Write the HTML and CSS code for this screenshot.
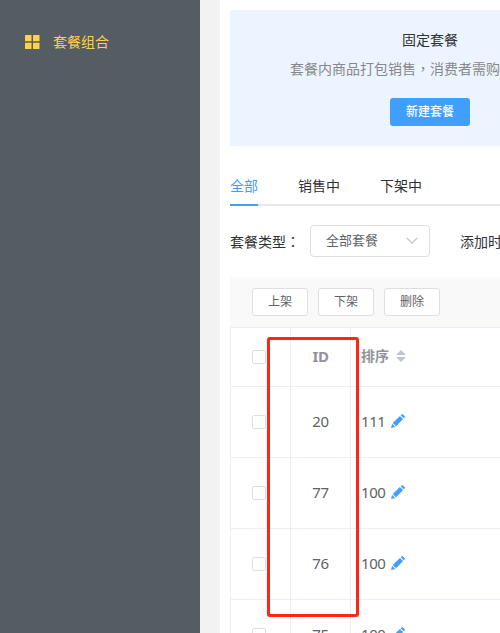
FILE: index.html
```html
<!DOCTYPE html>
<html lang="zh-CN">
<head>
<meta charset="utf-8">
<title>套餐组合</title>
<link rel="stylesheet" href="styles.css">
</head>
<body>
<svg class="defs" width="0" height="0">
  <symbol id="pencil" viewBox="0 0 14 14">
    <path d="M0 14 L1.1 9.8 L4.2 12.9 Z M1.8 9 L8.9 1.9 L12.1 5.1 L5 12.2 Z M9.7 1.2 L10.5 .4 Q11.2 -.2 11.9 .4 L13.6 2.1 Q14.2 2.8 13.6 3.5 L12.8 4.3 Z"/>
  </symbol>
</svg>
<div class="app">
  <aside class="sidebar">
    <a class="menu-item">
      <svg class="menu-icon" width="15" height="14" viewBox="0 0 15 14"><rect width="6.5" height="6.2" rx=".5"/><rect x="8" width="6.5" height="6.2" rx=".5"/><rect y="7.8" width="6.5" height="6.2" rx=".5"/><rect x="8" y="7.8" width="6.5" height="6.2" rx=".5"/></svg>
      <span>套餐组合</span>
    </a>
  </aside>
  <main class="content">
    <section class="promo">
      <div class="promo-card">
        <h3 class="promo-title">固定套餐</h3>
        <p class="promo-desc">套餐内商品打包销售<span class="punct" lang="zh-TW">&#xFF0C;</span>消费者需购</p>
        <button class="btn-primary">新建套餐</button>
      </div>
    </section>
    <nav class="tabs"><a class="tab active">全部</a><a class="tab">销售中</a><a class="tab">下架中</a></nav>
    <div class="filters">
      <span class="label">套餐类型<span class="punct" lang="zh-TW">&#xFF1A;</span></span>
      <div class="select"><span>全部套餐</span><svg width="12" height="8" viewBox="0 0 12 8"><path d="M.8 1 L6 6.2 L11.2 1"/></svg></div>
      <span class="label">添加时</span>
    </div>
    <div class="toolbar"><button class="btn">上架</button><button class="btn">下架</button><button class="btn">删除</button></div>
    <div class="table">
      <div class="row head"><div class="cell check"><i class="checkbox"></i></div><div class="cell id"><span class="num">ID</span></div><div class="cell sort"><span class="th">排序</span><svg class="carets" width="10" height="12" viewBox="0 0 10 12"><path d="M0 5 L5 0 L10 5 Z M0 7 L10 7 L5 12 Z"/></svg></div></div>
      <div class="row"><div class="cell check"><i class="checkbox"></i></div><div class="cell id"><span class="num">20</span></div><div class="cell sort"><span class="num">111</span><svg class="edit"><use href="#pencil"/></svg></div></div>
      <div class="row"><div class="cell check"><i class="checkbox"></i></div><div class="cell id"><span class="num">77</span></div><div class="cell sort"><span class="num">100</span><svg class="edit"><use href="#pencil"/></svg></div></div>
      <div class="row"><div class="cell check"><i class="checkbox"></i></div><div class="cell id"><span class="num">76</span></div><div class="cell sort"><span class="num">100</span><svg class="edit"><use href="#pencil"/></svg></div></div>
      <div class="row"><div class="cell check"><i class="checkbox"></i></div><div class="cell id"><span class="num">75</span></div><div class="cell sort"><span class="num">100</span><svg class="edit"><use href="#pencil"/></svg></div></div>
      <div class="highlight"></div>
    </div>
  </main>
</div>
</body>
</html>
```
FILE: styles.css
```css
* { box-sizing: border-box; }
body {
  margin: 0;
  font: 14px/20px "Noto Sans", "Noto Sans CJK SC", sans-serif;
  color: #303133;
}
.defs { position: absolute; }
.app {
  display: flex;
  width: 100%;
  height: 633px;
  overflow: hidden;
  background: #f2f2f2;
}
.sidebar { flex: 0 0 200px; background: #545c64; }
.menu-item {
  display: flex;
  align-items: center;
  gap: 13px;
  height: 20px;
  margin: 32px 0 0 25px;
  color: #ffd04b;
}
.menu-icon { fill: #ffd04b; }
.content {
  flex: 1;
  min-width: 0;
  height: 633px;
  margin-left: 20px;
  padding: 10px 0 0 10px;
  overflow: hidden;
  background: #fff;
}
.promo { height: 136px; overflow: hidden; background: #ecf5ff; }
.promo-card {
  display: flex;
  flex-direction: column;
  align-items: center;
  width: 400px;
  padding-top: 20px;
}
.promo-title { margin: 0; font-size: 14px; font-weight: 400; }
.promo-desc {
  width: 280px;
  height: 20px;
  margin: 9px 0 0;
  color: #888;
  white-space: nowrap;
}
.punct { font-family: "Noto Sans CJK TC", sans-serif; line-height: 1; }
button { font: 12px/16px "Noto Sans", "Noto Sans CJK SC", sans-serif; padding: 0; border-radius: 3px; }
.btn-primary {
  width: 80px;
  height: 28px;
  margin-top: 19px;
  border: 0;
  background: #409eff;
  color: #fff;
  font-weight: 500;
}
.tabs {
  display: flex;
  gap: 40px;
  height: 40px;
  margin-top: 20px;
  border-bottom: 2px solid #e4e7ed;
}
.tab { height: 40px; line-height: 40px; }
.tab.active { border-bottom: 2px solid #409eff; color: #409eff; }
.filters {
  display: flex;
  align-items: center;
  height: 32px;
  margin-top: 19px;
  white-space: nowrap;
}
.label { height: 20px; margin-top: 2px; }
.select {
  display: flex;
  flex: 0 0 120px;
  align-items: center;
  justify-content: space-between;
  height: 32px;
  margin: 0 30px 0 10px;
  padding: 0 11px 2px 15px;
  border: 1px solid #dcdfe6;
  border-radius: 4px;
  color: #606266;
  font-size: 13px;
}
.select svg { fill: none; stroke: #c0c4cc; stroke-width: 1.1; margin-top: 2px; }
.toolbar {
  display: flex;
  gap: 10px;
  height: 50px;
  margin-top: 20px;
  padding: 11px 22px;
  background: #f9f9f9;
}
.btn { width: 56px; height: 28px; border: 1px solid #dcdfe6; background: #fff; color: #606266; }
.table {
  position: relative;
  border-top: 1px solid #ebeef5;
  border-left: 1px solid #ebeef5;
  color: #606266;
}
.row { display: flex; height: 71px; border-bottom: 1px solid #ebeef5; }
.row.head { height: 59px; color: #909399; font-weight: 700; }
.cell { display: flex; align-items: center; }
.check { width: 60px; padding-left: 21px; border-right: 1px solid #ebeef5; }
.id { width: 60px; justify-content: center; border-right: 1px solid #ebeef5; }
.sort { flex: 1; padding-left: 10px; }
.num { font-size: 15px; letter-spacing: -.4px; padding-bottom: 3px; }
.th { padding-bottom: 2px; }
.checkbox { width: 14px; height: 14px; border: 1px solid #dcdfe6; border-radius: 2px; background: #fff; }
.carets { margin: -2px 0 0 7px; fill: #c0c4cc; }
.edit { width: 14px; height: 14px; margin: -2px 0 0 5px; fill: #409eff; }
.highlight {
  position: absolute;
  top: 9px;
  left: 36px;
  width: 92px;
  height: 280px;
  border: 3px solid #ff2414;
  border-radius: 3px;
}
```
